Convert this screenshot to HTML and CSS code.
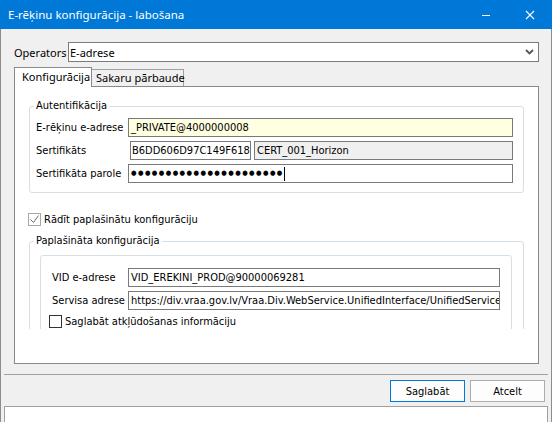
FILE: index.html
```html
<!DOCTYPE html>
<html>
<head>
  <meta charset="utf-8">
  <link rel="stylesheet" href="styles.css">
  <title>E-rēķinu konfigurācija - labošana</title>
</head>
<body>
  <div class="window">
    <div class="titlebar">
      <span class="title">E-rēķinu konfigurācija - labošana</span>
      <div class="caption-buttons">
        <span class="cap-btn">
          <svg width="10" height="10" viewBox="0 0 10 10"><path d="M1 5.5h8" stroke="#fff" stroke-width="1"/></svg>
        </span>
        <span class="cap-btn">
          <svg width="10" height="10" viewBox="0 0 10 10"><path d="M1 1l8 8M9 1l-8 8" stroke="#fff" stroke-width="1.1"/></svg>
        </span>
      </div>
    </div>

    <div class="client">
      <div class="top-area">
        <div class="operator-row">
          <label class="operator-label">Operators</label>
          <div class="combo">
            <span>E-adrese</span>
            <svg class="chevron" width="9" height="6" viewBox="0 0 9 6"><path d="M1 1l3.5 3.5L8 1" fill="none" stroke="#555" stroke-width="1.8"/></svg>
          </div>
        </div>

        <div class="tabs">
          <div class="tab active">Konfigurācija</div>
          <div class="tab">Sakaru pārbaude</div>
        </div>

        <div class="tab-panel">
          <div class="scroll">
            <div class="group auth">
              <span class="group-title">Autentifikācija</span>
              <div class="form-row">
                <label class="lbl">E-rēķinu e-adrese</label>
                <div class="field required">_PRIVATE@4000000008</div>
              </div>
              <div class="form-row">
                <label class="lbl">Sertifikāts</label>
                <div class="field cert-id">B6DD606D97C149F6185</div>
                <div class="field readonly">CERT_001_Horizon</div>
              </div>
              <div class="form-row">
                <label class="lbl">Sertifikāta parole</label>
                <div class="field password">●●●●●●●●●●●●●●●●●●●●●●<span class="caret"></span></div>
              </div>
            </div>

            <div class="check-row outer-check">
              <span class="checkbox checked">
                <svg width="11" height="11" viewBox="0 0 11 11"><path d="M1.5 5.5l3 3L9.5 1.5" fill="none" stroke="#6f6f6f" stroke-width="1"/></svg>
              </span>
              <span>Rādīt paplašinātu konfigurāciju</span>
            </div>

            <div class="group ext">
              <span class="group-title">Paplašināta konfigurācija</span>
              <div class="inner-box">
                <div class="form-row">
                  <label class="lbl short">VID e-adrese</label>
                  <div class="field">VID_EREKINI_PROD@90000069281</div>
                </div>
                <div class="form-row">
                  <label class="lbl short">Servisa adrese</label>
                  <div class="field">https://div.vraa.gov.lv/Vraa.Div.WebService.UnifiedInterface/UnifiedService</div>
                </div>
                <div class="check-row inner-check">
                  <span class="checkbox"></span>
                  <span>Saglabāt atkļūdošanas informāciju</span>
                </div>
              </div>
            </div>
          </div>
        </div>
      </div>

      <div class="separator"></div>

      <div class="buttons">
        <button type="button" class="btn primary">Saglabāt</button>
        <button type="button" class="btn">Atcelt</button>
      </div>

      <div class="status-box"></div>
    </div>
  </div>
</body>
</html>
```

FILE: styles.css
```css
:root {
  --face: #f0f0f0;
  --title: #0078d7;
  --frame: #8c8c8c;
  --edit-border: #7a7a7a;
  --group-border: #d5dfe5;
  --ui-font: "Segoe UI", "Noto Sans", sans-serif;
  --dlg-font: Tahoma, "DejaVu Sans Condensed", sans-serif;
}

html, body {
  margin: 0;
  padding: 0;
  background: #fff;
}

body {
  font-family: var(--ui-font);
  font-size: 11px;
  color: #000;
  overflow: hidden;
}

.window {
  width: 552px;
  height: 422px;
  display: flex;
  flex-direction: column;
}

/* title bar */
.titlebar {
  height: 29px;
  background: var(--title);
  color: #fff;
  display: flex;
  align-items: center;
  justify-content: space-between;
  flex: none;
}

.title {
  padding-left: 8px;
  font-size: 11.5px;
  line-height: 16px;
}

.caption-buttons {
  display: flex;
  height: 100%;
}

.cap-btn {
  width: 44px;
  display: flex;
  align-items: center;
  justify-content: center;
}

/* client area */
.client {
  flex: 1;
  background: var(--face);
  border-left: 1px solid var(--frame);
  border-right: 1px solid var(--frame);
  display: flex;
  flex-direction: column;
  min-height: 0;
}

.top-area {
  padding: 13px 12px 0 13px;
}

.operator-row {
  display: flex;
  align-items: center;
  height: 20px;
}

.operator-label {
  width: 54px;
  flex: none;
}

.combo {
  flex: 1;
  height: 20px;
  box-sizing: border-box;
  border: 1px solid var(--edit-border);
  background: #fff;
  display: flex;
  align-items: center;
  justify-content: space-between;
  padding: 0 4px 0 1px;
}

/* tabs */
.tabs {
  display: flex;
  align-items: flex-end;
  height: 19px;
  margin-top: 5px;
}

.tab {
  box-sizing: border-box;
  height: 17px;
  width: 92px;
  line-height: 15px;
  padding: 0 0 0 4px;
  white-space: nowrap;
  background: var(--face);
  border: 1px solid #a0a0a0;
  border-left: none;
  border-bottom: none;
}

.tab.active {
  position: relative;
  z-index: 1;
  height: 20px;
  margin-bottom: -1px;
  line-height: 18px;
  width: 78px;
  padding: 0 0 0 7px;
  background: #fff;
  border: 1px solid #898989;
  border-bottom: none;
}

.tab-panel {
  box-sizing: border-box;
  height: 278px;
  border: 1px solid #898989;
  background: #fff;
  padding-bottom: 33px;
  font-family: var(--dlg-font);
  font-size: 11px;
}

.scroll {
  height: 242px;
  overflow: hidden;
  padding: 19px 14px 0 14px;
  box-sizing: border-box;
}

/* group boxes */
.group {
  position: relative;
  border: 1px solid var(--group-border);
  border-radius: 3px;
}

.group-title {
  position: absolute;
  top: -8px;
  left: 4px;
  padding: 0 2px;
  background: #fff;
  line-height: 14px;
}

.auth {
  padding: 11px 10px 9px 6px;
}

.form-row {
  display: flex;
  align-items: center;
  height: 19px;
  margin-bottom: 4px;
}

.form-row:last-child {
  margin-bottom: 0;
}

.lbl {
  width: 92px;
  flex: none;
}

.lbl.short {
  width: 76px;
}

.field {
  flex: 1;
  min-width: 0;
  height: 19px;
  box-sizing: border-box;
  border: 1px solid var(--edit-border);
  background: #fff;
  padding: 0 2px;
  line-height: 17px;
  white-space: nowrap;
  overflow: hidden;
}

.field.required {
  background: #ffffe1;
}

.field.cert-id {
  flex: none;
  width: 121px;
  padding: 0 1px;
  margin-left: 2px;
  margin-right: 3px;
}

.field.readonly {
  background: var(--face);
}

.field.password {
  font-size: 7px;
  letter-spacing: 1.45px;
  display: flex;
  align-items: center;
}

.caret {
  display: inline-block;
  width: 1px;
  height: 14px;
  background: #000;
  margin-left: 0;
}

/* check boxes */
.check-row {
  display: flex;
  align-items: center;
  height: 15px;
}

.checkbox {
  width: 13px;
  height: 13px;
  box-sizing: border-box;
  border: 1px solid #333;
  background: #fff;
  display: flex;
  align-items: center;
  justify-content: center;
  flex: none;
  margin-right: 3px;
}

.checkbox.checked {
  border-color: #a8a8a8;
}

.outer-check {
  margin: 19px 0 14px -1px;
}

.ext {
  padding: 13px 11px 0 10px;
}

.inner-box {
  border: 1px solid var(--group-border);
  border-radius: 3px;
  padding: 12px 11px 10px 11px;
  height: 120px;
}

.inner-check {
  margin: 4px 0 6px -3px;
}

/* bottom */
.separator {
  height: 1px;
  background: #a0a0a0;
  margin: 10px 3px 0 3px;
}

.buttons {
  display: flex;
  justify-content: flex-end;
  gap: 5px;
  padding: 5px 6px 0 0;
}

.btn {
  width: 75px;
  height: 22px;
  box-sizing: border-box;
  border: 1px solid #adadad;
  background: #fdfdfd;
  font-family: var(--dlg-font);
  font-size: 11px;
  color: #000;
  padding: 0;
}

.btn.primary {
  border-color: #0078d7;
}

.status-box {
  margin: 4px 3px 0 3px;
  flex: 1;
  border: 1px solid #a0a0a0;
  border-bottom: none;
  background: #fff;
}
```
